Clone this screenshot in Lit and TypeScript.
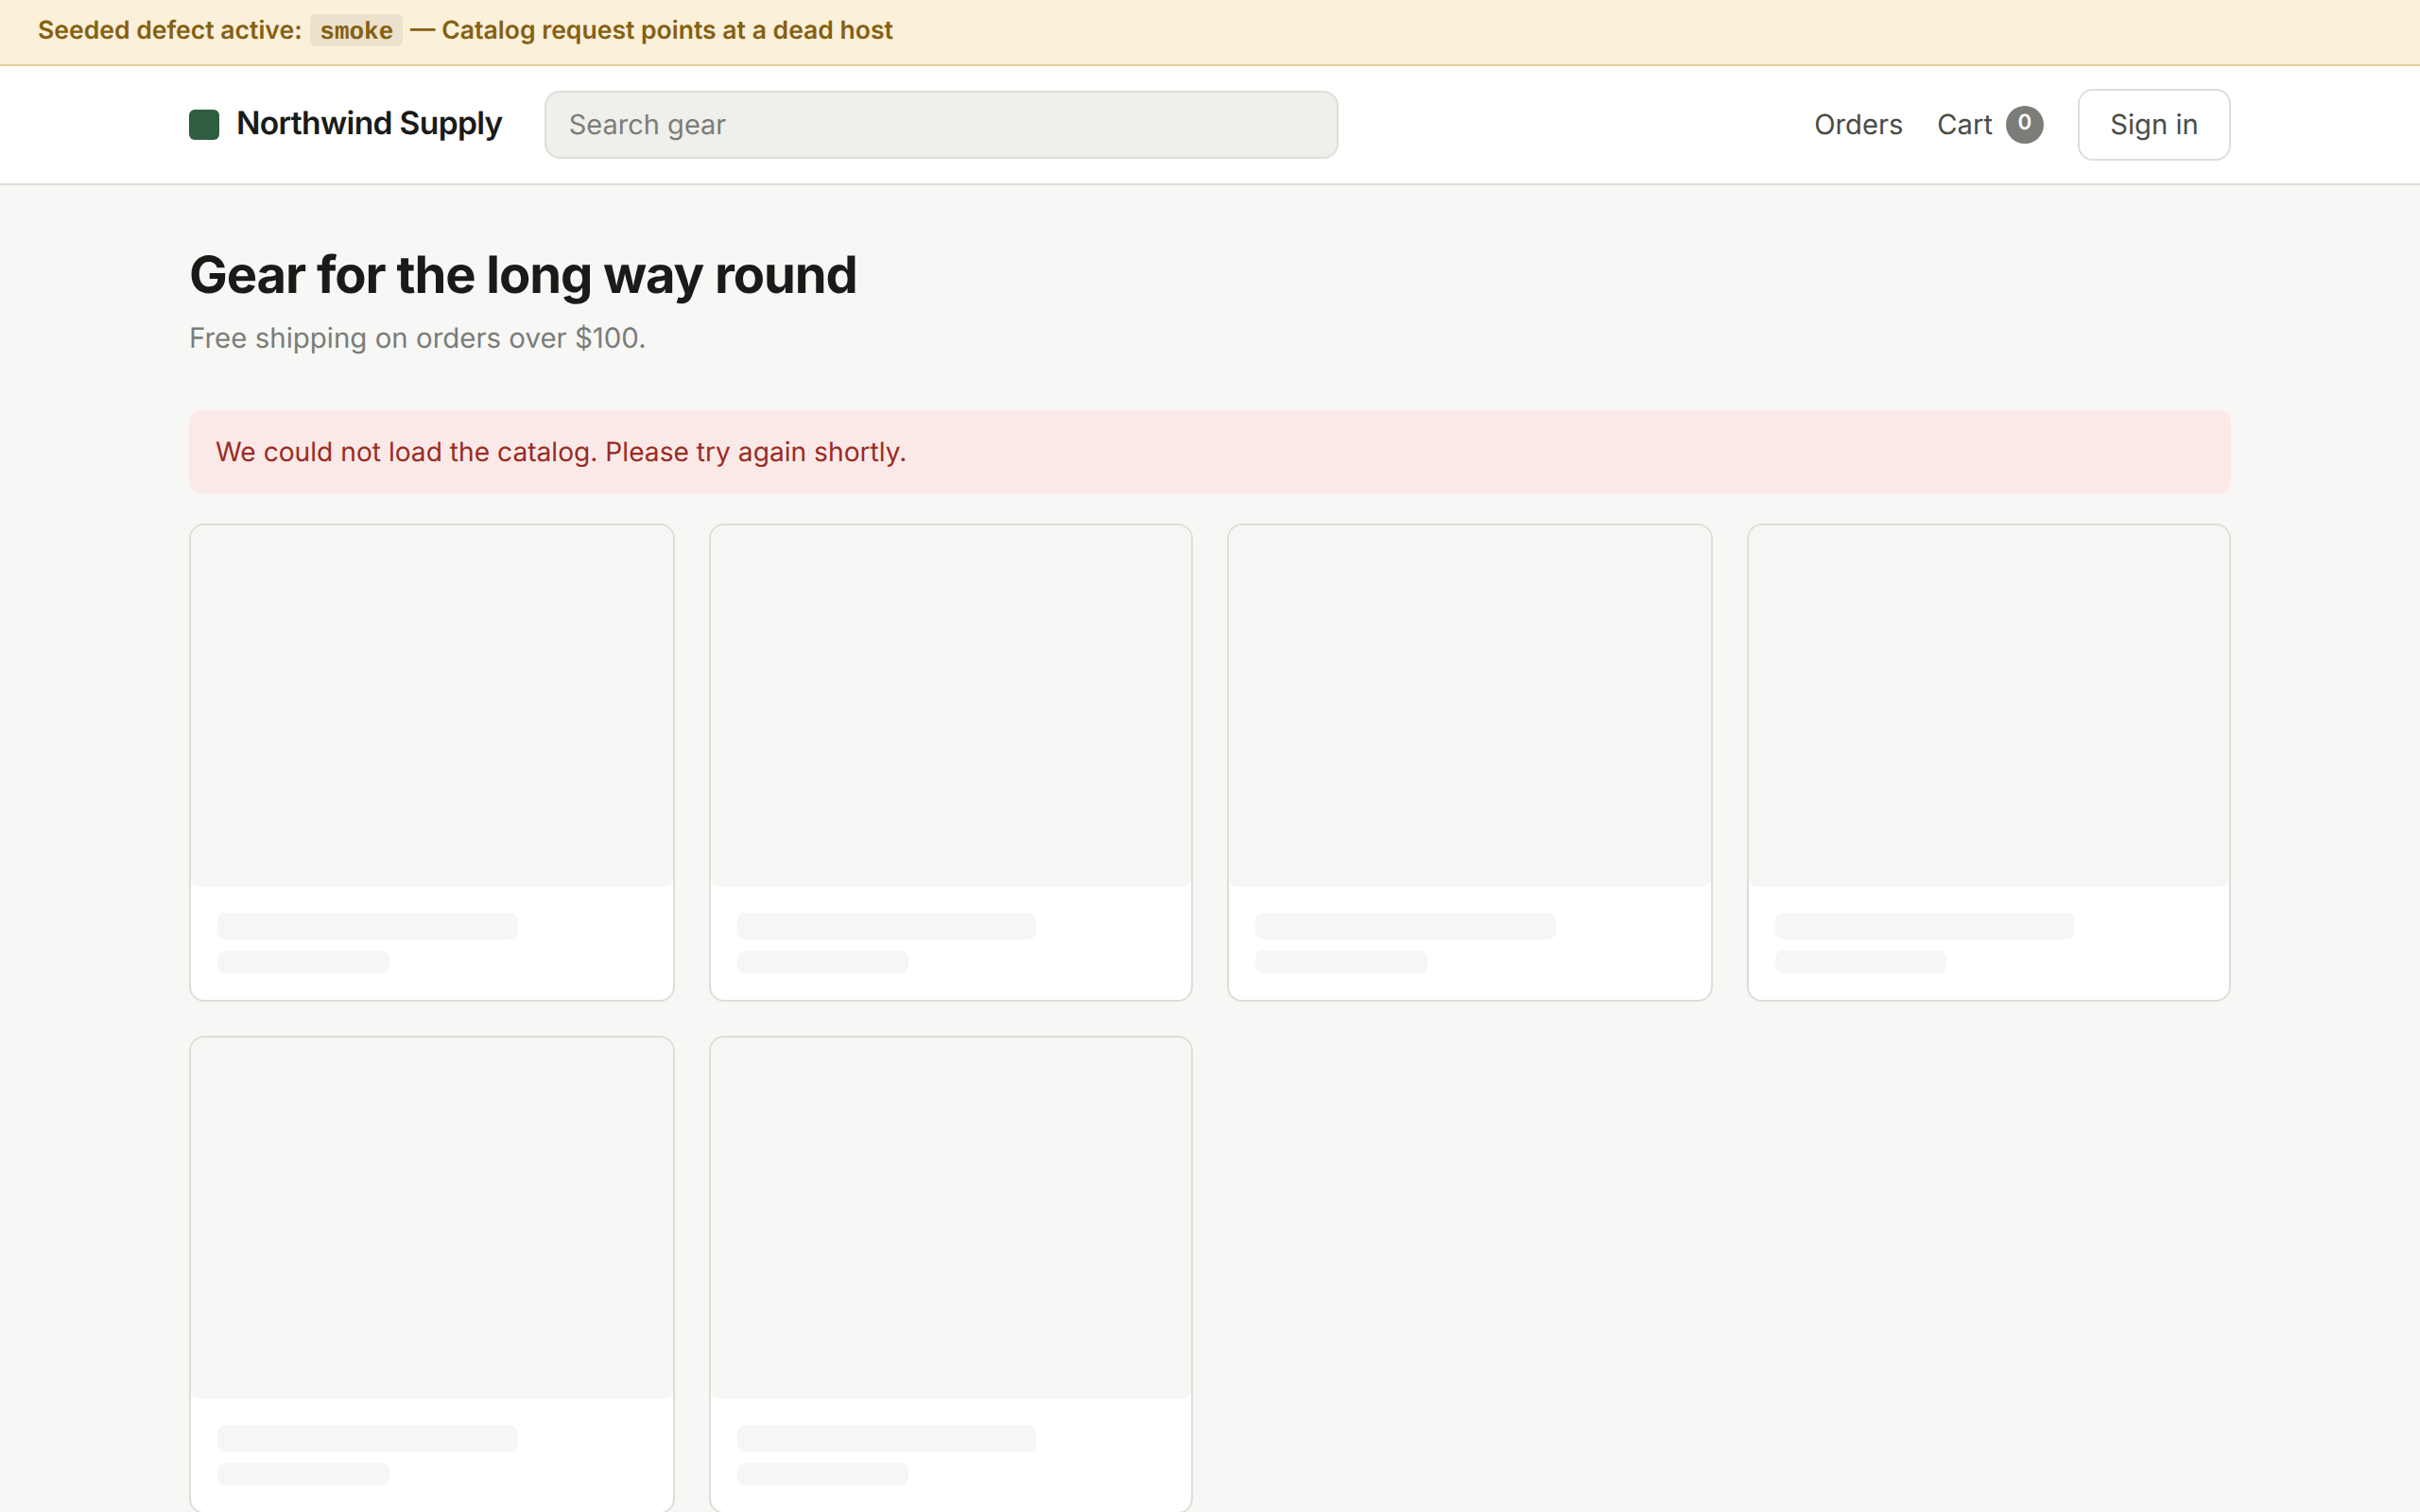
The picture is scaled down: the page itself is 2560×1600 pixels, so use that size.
import { LitElement, html, css } from 'lit';
import { customElement } from 'lit/decorators.js';

@customElement('app-root')
export class AppRoot extends LitElement {
  static styles = css`
    :host {
      display: block;
      height: 100vh;
      overflow: hidden;
      background: #f7f7f5;
      color: #1a1a18;
      font-family: Inter, sans-serif;
      text-rendering: geometricPrecision;
    }

    .banner {
      height: 68px;
      padding: 0 40px;
      background: #fbf0d9;
      border-bottom: 2px solid #e5cf95;
      color: #856011;
      font-size: 26.56px;
      font-weight: 600;
      line-height: 65px;
    }

    .banner code {
      margin: 0 1px 0 2px;
      padding: 4px 10px 0;
      border-radius: 6px;
      background: rgba(0, 0, 0, 0.06);
      font-family: 'Liberation Mono', monospace;
      font-size: 26px;
      font-weight: 700;
    }

    header {
      display: flex;
      align-items: center;
      height: 124px;
      padding: 0 200px;
      background: #fff;
      border-bottom: 2px solid #deded8;
    }

    .brand {
      display: flex;
      align-items: center;
      gap: 18px;
      margin-right: 44px;
      font-size: 33.6px;
      font-weight: 600;
      letter-spacing: -0.67px;
      line-height: 40px;
    }

    .brand-name {
      margin-top: -2px;
    }

    .logo {
      width: 32px;
      height: 32px;
      border-radius: 6px;
      background: #2f5d3f;
    }

    .search {
      display: flex;
      align-items: center;
      box-sizing: border-box;
      width: 840px;
      height: 72px;
      padding: 0 24px 2px;
      background: #efefeb;
      border: 2px solid #deded8;
      border-radius: 16px;
      color: #7a7d78;
      font-size: 29px;
    }

    nav {
      display: flex;
      align-items: center;
      gap: 36px;
      margin-left: auto;
      color: #4a4c48;
      font-size: 29.2px;
    }

    .cart {
      display: flex;
      align-items: center;
      gap: 14px;
    }

    .badge {
      display: flex;
      justify-content: center;
      width: 40px;
      height: 40px;
      border-radius: 50%;
      background: #7a7d78;
      color: #fff;
      font-size: 22.4px;
      font-weight: 600;
      line-height: 36px;
    }

    .signin {
      display: flex;
      align-items: center;
      justify-content: center;
      box-sizing: border-box;
      width: 162px;
      height: 76px;
      background: #fff;
      border: 2px solid #deded8;
      border-radius: 16px;
    }

    main {
      padding: 61px 200px 0;
    }

    h1 {
      margin: 0;
      font-size: 54.4px;
      font-weight: 700;
      line-height: 68px;
      letter-spacing: -1.088px;
    }

    .sub {
      margin: 11px 0 0;
      color: #7a7d78;
      font-size: 29.44px;
      line-height: 44px;
    }

    .alert {
      display: flex;
      align-items: center;
      height: 88px;
      margin: 54px 0 32px;
      padding: 0 28px;
      border-radius: 12px;
      background: #fbe9e7;
      color: #992b22;
      font-size: 28.16px;
    }

    .grid {
      display: grid;
      grid-template-columns: 514px 512px 514px 512px;
      gap: 36px;
    }

    .card {
      overflow: hidden;
      background: #fff;
      border: 2px solid #deded8;
      border-radius: 16px;
    }

    .image {
      height: 382px;
      border-radius: 8px;
      background: #f6f6f4;
    }

    .body {
      padding: 28px;
    }

    .bar {
      border-radius: 8px;
      background: #f6f6f4;
    }

    .title {
      width: 70%;
      height: 28px;
      margin-bottom: 12px;
    }

    .price {
      width: 40%;
      height: 24px;
    }
  `;

  render() {
    return html`
      <div class="banner">Seeded defect active: <code>smoke</code> — Catalog request points at a dead host</div>
      <header>
        <div class="brand"><span class="logo"></span><span class="brand-name">Northwind Supply</span></div>
        <div class="search">Search gear</div>
        <nav>
          <span>Orders</span>
          <span class="cart">Cart <span class="badge">0</span></span>
          <span class="signin">Sign in</span>
        </nav>
      </header>
      <main>
        <h1>Gear for the long way round</h1>
        <p class="sub">Free shipping on orders over $100.</p>
        <div class="alert">We could not load the catalog. Please try again shortly.</div>
        <div class="grid">
          ${[1, 2, 3, 4, 5, 6].map(() => html`
            <div class="card">
              <div class="image"></div>
              <div class="body">
                <div class="bar title"></div>
                <div class="bar price"></div>
              </div>
            </div>
          `)}
        </div>
      </main>
    `;
  }
}
